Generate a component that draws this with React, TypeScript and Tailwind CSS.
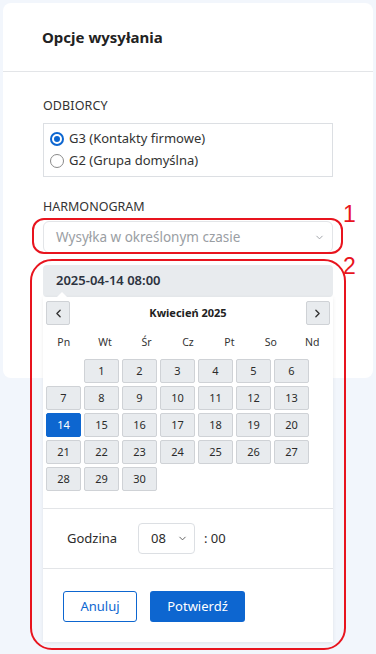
import React from "react";
import { ChevronDown, ChevronLeft, ChevronRight } from "lucide-react";

const font = { fontFamily: '"Noto Sans", "Open Sans", sans-serif' };

export default function App() {
  const days: (number | null)[] = [null];
  for (let i = 1; i <= 30; i++) days.push(i);
  const weekdays = ["Pn", "Wt", "Śr", "Cz", "Pt", "So", "Nd"];
  return (
    <div className="min-h-[654px] w-[376px] bg-[#f2f6fc] pt-[3px] relative overflow-hidden" style={font}>
      <div className="mx-[3px] h-[375px] rounded-lg bg-white relative">
        <div className="h-[69px] flex items-center px-[39px] border-b border-[#e3e5e8]">
          <h1 className="text-[15px] font-bold text-[#222]">Opcje wysyłania</h1>
        </div>
        <div className="px-[40px] pt-[24px]">
          <div className="text-[12.5px] leading-[20px] text-[#333] tracking-[0.1px]">ODBIORCY</div>
          <div className="mt-[7px] w-[290px] border border-[#dcdfe3] px-[6px] py-[4px]">
            <label className="flex items-center h-[22px] gap-[5px] text-[13px] text-[#333]">
              <span className="w-[14px] h-[14px] rounded-full bg-[#0d66d0] flex items-center justify-center">
                <span className="w-[6px] h-[6px] rounded-full bg-[#0d66d0] border-[2px] border-white box-content"></span>
              </span>
              G3 (Kontakty firmowe)
            </label>
            <label className="flex items-center h-[22px] gap-[5px] text-[13px] text-[#333]">
              <span className="w-[14px] h-[14px] rounded-full border-[1.5px] border-[#8a8a8a] bg-white"></span>
              G2 (Grupa domyślna)
            </label>
          </div>
          <div className="mt-[20px] text-[12.5px] leading-[20px] text-[#333]">HARMONOGRAM</div>
          <div className="relative mt-[4px] w-[290px]">
            <div className="h-[32px] rounded-[6px] border border-[#e3e5e8] flex items-center justify-between pl-[12px] pr-[7px]">
              <span className="text-[13.5px] text-[#9a9ea3]">Wysyłka w określonym czasie</span>
              <ChevronDown size={11} strokeWidth={2} className="text-[#9a9ea3]" />
            </div>
            <div className="relative mt-[12px] h-[32px] rounded-[4px] bg-[#e8ebee] flex items-center pl-[13px]">
              <span className="text-[13px] font-semibold text-[#2d3340]">2025-04-14 08:00</span>
            </div>
            <div className="absolute left-0 top-[76px] w-[290px] h-[345px] bg-white shadow-[0_1px_4px_rgba(0,0,0,0.08)] z-10">
              <div className="absolute -top-[5px] left-[14px] w-0 h-0 border-l-[5px] border-r-[5px] border-b-[5px] border-l-transparent border-r-transparent border-b-white"></div>
              <div className="flex items-center justify-between px-[3px] pt-[4px]">
                <button className="w-[24px] h-[24px] rounded-[2px] bg-[#e8ebee] border border-[#cfd2d6] flex items-center justify-center text-[#333]">
                  <ChevronLeft size={13} strokeWidth={2.5} />
                </button>
                <span className="text-[11px] font-bold text-[#222]">Kwiecień 2025</span>
                <button className="w-[24px] h-[24px] rounded-[2px] bg-[#e8ebee] border border-[#cfd2d6] flex items-center justify-center text-[#333]">
                  <ChevronRight size={13} strokeWidth={2.5} />
                </button>
              </div>
              <div className="mt-[7px] grid grid-cols-7 text-[10.5px] leading-[20px] text-[#333]">
                {weekdays.map((w) => (
                  <div key={w} className="text-center">{w}</div>
                ))}
              </div>
              <div className="mt-[7px] px-[3px] grid grid-cols-[repeat(7,35px)] auto-rows-[24px] gap-[3px]">
                {days.map((d, i) =>
                  d === null ? (
                    <div key={i}></div>
                  ) : d === 14 ? (
                    <div key={i} className="rounded-[2px] bg-[#0d66d0] border border-[#0d66d0] text-white text-[11px] flex items-center justify-center">{d}</div>
                  ) : (
                    <div key={i} className="rounded-[2px] bg-[#e8ebee] border border-[#cfd2d6] text-[#2b2b2b] text-[11px] flex items-center justify-center">{d}</div>
                  )
                )}
              </div>
              <div className="mt-[17px] border-t border-[#e3e5e8] h-[60px] flex items-center pl-[24px]">
                <span className="text-[13px] text-[#2b2b2b] w-[71px]">Godzina</span>
                <div className="w-[57px] h-[31px] rounded-[4px] border border-[#dcdfe3] flex items-center justify-between pl-[12px] pr-[6px]">
                  <span className="text-[13px] text-[#2b2b2b]">08</span>
                  <ChevronDown size={11} strokeWidth={2} className="text-[#555]" />
                </div>
                <span className="ml-[9px] text-[13px] text-[#2b2b2b]">: 00</span>
              </div>
              <div className="border-t border-[#e3e5e8] pt-[22px] pl-[20px] flex gap-[13px]">
                <button className="w-[74px] h-[31px] rounded-[3px] border border-[#0d66d0] text-[#0d66d0] text-[13px]">Anuluj</button>
                <button className="w-[95px] h-[31px] rounded-[3px] bg-[#0d66d0] text-white text-[13px]">Potwierdź</button>
              </div>
            </div>
          </div>
        </div>
      </div>
      {/* annotations */}
      <div className="absolute left-[32px] top-[218px] w-[311px] h-[36px] rounded-[12px] border-2 border-[#e8141e] z-20 pointer-events-none"></div>
      <div className="absolute left-[343px] top-[200px] text-[23px] leading-[28px] text-[#e8141e] z-20" style={{ fontFamily: '"Liberation Sans", sans-serif' }}>1</div>
      <div className="absolute left-[30px] top-[259px] w-[316px] h-[391px] rounded-[22px] border-2 border-[#e8141e] z-20 pointer-events-none"></div>
      <div className="absolute left-[343px] top-[252px] text-[23px] leading-[28px] text-[#e8141e] z-20" style={{ fontFamily: '"Liberation Sans", sans-serif' }}>2</div>
    </div>
  );
}
